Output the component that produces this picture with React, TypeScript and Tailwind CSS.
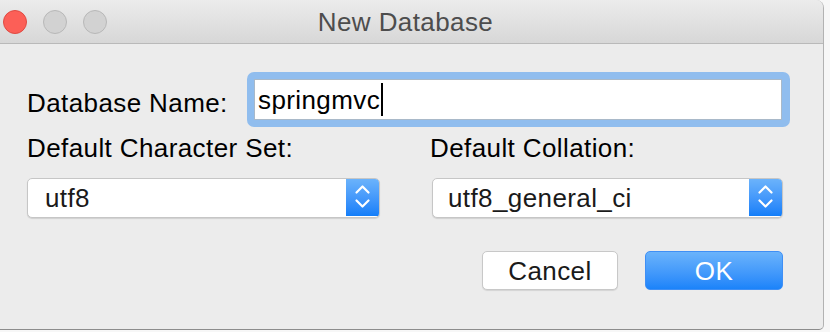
import React from "react";

function Chevrons() {
  return (
    <svg width="33" height="40" viewBox="0 0 33 40" fill="none">
      <polyline points="10.5,15.5 16.5,9.5 22.5,15.5" stroke="white" strokeWidth="2.2" strokeLinecap="round" strokeLinejoin="round" />
      <polyline points="10.5,23.5 16.5,29.5 22.5,23.5" stroke="white" strokeWidth="2.2" strokeLinecap="round" strokeLinejoin="round" />
    </svg>
  );
}

function Select({ value, width, pad }: { value: string; width: string; pad: string }) {
  return (
    <div
      className={`${width} h-[40px] flex rounded-[5px] border border-[#c6c6c6] bg-white shadow-[0_1px_1px_rgba(0,0,0,0.12)] overflow-hidden`}
    >
      <div className={`flex-1 flex items-center ${pad} text-[#1a1a1a]`}>{value}</div>
      <div className="w-[33px] h-full bg-gradient-to-b from-[#6db4fb] to-[#127ef9] flex items-center justify-center -my-px">
        <Chevrons />
      </div>
    </div>
  );
}

export default function App() {
  return (
    <div className="w-[830px] h-[332px] bg-[#f7f7f7] font-['Liberation_Sans',Arial,sans-serif] text-[26px] tracking-[0.4px] leading-[26px]">
      <div className="w-[824px] h-[330px] bg-[#ececec] border-r border-b border-r-[#b2b2b2] border-b-[#8c8c8c] rounded-tr-[8px] rounded-br-[5px] overflow-hidden flex flex-col">
        {/* Title bar */}
        <div className="h-[44px] shrink-0 border-b border-[#b9b9b9] bg-gradient-to-b from-[#ececec] to-[#d7d7d7] grid grid-cols-[1fr_auto_1fr] items-center">
          <div className="flex items-center gap-[16px] pl-[3px]">
            <div className="w-[24px] h-[24px] rounded-full bg-[#fc5f57] border border-[#df4a42]" />
            <div className="w-[24px] h-[24px] rounded-full bg-[#d2d2d2] border border-[#b8b8b8]" />
            <div className="w-[24px] h-[24px] rounded-full bg-[#d2d2d2] border border-[#b8b8b8]" />
          </div>
          <div className="text-[#4d4d4d] pr-[12px]">New Database</div>
          <div />
        </div>

        {/* Body */}
        <div className="pl-[27px] flex flex-col">
          {/* Row 1 */}
          <div className="mt-[28px] flex items-center h-[55px]">
            <div className="w-[220px] mt-[6px] text-black">Database Name:</div>
            <div className="w-[543px] h-[55px] rounded-[7px] bg-[#90bdee] p-[7px] pr-[8px]">
              <div className="h-full bg-white border border-[#a9b9c9] flex items-center pl-[3px] text-black">
                <span>springmvc</span>
                <span className="inline-block w-[2px] h-[33px] bg-black ml-[1px]" />
              </div>
            </div>
          </div>

          {/* Row 2 labels */}
          <div className="mt-[8px] flex text-black">
            <div className="w-[403px]">Default Character Set:</div>
            <div>Default Collation:</div>
          </div>

          {/* Row 3 selects */}
          <div className="mt-[17px] flex">
            <div className="w-[405px]">
              <Select value="utf8" width="w-[353px]" pad="pl-[17px]" />
            </div>
            <Select value="utf8_general_ci" width="w-[351px]" pad="pl-[15px]" />
          </div>

          {/* Row 4 buttons */}
          <div className="mt-[33px] flex justify-end gap-[27px] pr-[40px]">
            <div className="w-[136px] h-[39px] rounded-[5px] bg-white border border-[#c8c8c8] shadow-[0_1px_1px_rgba(0,0,0,0.1)] flex items-center justify-center text-[#1a1a1a]">
              Cancel
            </div>
            <div className="w-[138px] h-[39px] rounded-[5px] bg-gradient-to-b from-[#6ab3fb] to-[#1a83fa] border border-[#3f8ff5] flex items-center justify-center text-white">
              OK
            </div>
          </div>
        </div>
      </div>
    </div>
  );
}
